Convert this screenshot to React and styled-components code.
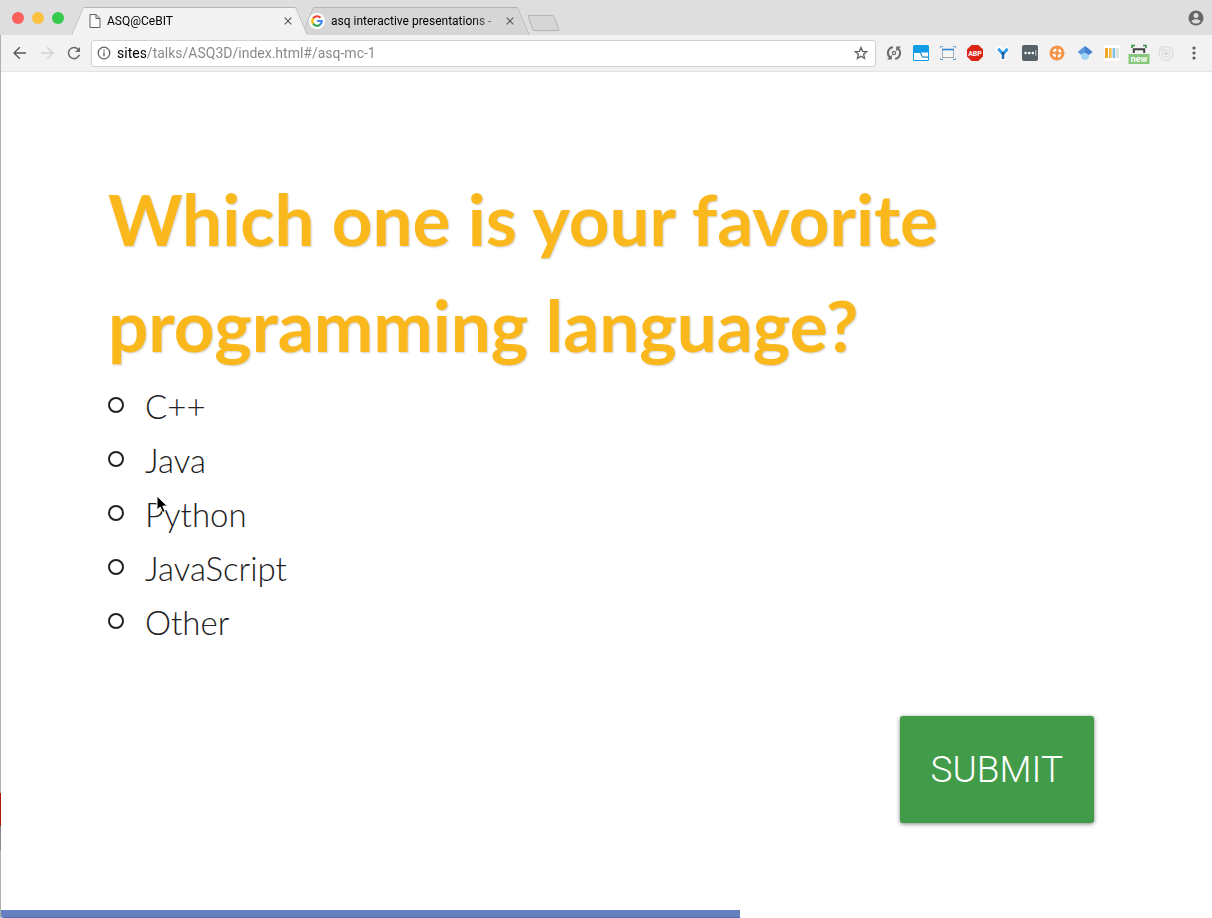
import React from "react";
import styled, { createGlobalStyle } from "styled-components";

const GlobalStyle = createGlobalStyle`
  *, *::before, *::after { box-sizing: border-box; }
  body { margin: 0; background: #fff; }
  button { border: 0; padding: 0; background: none; font: inherit; color: inherit; cursor: pointer; }
`;

const Window = styled.div`
  position: relative;
  display: flex;
  flex-direction: column;
  min-height: 100vh;
  font-family: Roboto, "Liberation Sans", sans-serif;

  &::before {
    content: "";
    position: absolute;
    top: 35px;
    bottom: 0;
    left: 0;
    width: 1px;
    background: linear-gradient(
      to top,
      #b0b0b0 68px,
      #8a8a8a 68px,
      #8a8a8a 92px,
      #ab1a0c 92px,
      #ab1a0c 125px,
      #b0b0b0 125px
    );
  }
`;

const TabStrip = styled.header`
  display: flex;
  align-items: flex-end;
  height: 35px;
  padding-right: 8px;
  background: #dedede;
`;

const WindowControls = styled.div`
  display: flex;
  align-items: center;
  align-self: stretch;
  gap: 8px;
  width: 77px;
  padding-left: 12px;
`;

const Light = styled.button`
  width: 12px;
  height: 12px;
  border-radius: 50%;
  background: ${(p) => p.$color};
`;

const Tabs = styled.nav`
  display: flex;
  gap: 5px;
`;

const Tab = styled.div`
  position: relative;
  z-index: ${(p) => (p.$active ? 2 : 1)};
  display: flex;
  align-items: center;
  width: ${(p) => (p.$active ? "225px" : "217px")};
  height: 28px;
  padding-right: 8px;
  padding-left: ${(p) => (p.$active ? "12px" : "2px")};

  &::before,
  &::after {
    content: "";
    position: absolute;
    z-index: -1;
    top: 0;
    bottom: 0;
    width: 55%;
    background: ${(p) => (p.$active ? "#f2f2f2" : "#d6d6d6")};
    border-top: 1px solid #b4b4b4;
  }
  &::before {
    left: 0;
    border-left: 1px solid #b4b4b4;
    border-top-left-radius: 2px;
    transform: skewX(-23deg);
  }
  &::after {
    right: 0;
    border-right: 1px solid #b4b4b4;
    border-top-right-radius: 2px;
    transform: skewX(23deg);
  }
`;

const TabLink = styled.a`
  display: flex;
  flex: 1;
  align-items: center;
  gap: 6px;
  min-width: 0;
  color: #000;
  font-size: 12px;
  line-height: 16px;
  text-decoration: none;
`;

const TabTitle = styled.span`
  flex: 1;
  overflow: hidden;
  white-space: nowrap;
  mask-image: linear-gradient(to left, transparent, #000 32px);
`;

const TabClose = styled.button`
  display: flex;
  align-items: center;
  justify-content: center;
  width: 12px;
  height: 14px;
  color: #5a5a5a;
`;

const NewTab = styled.button`
  width: 27px;
  height: 16px;
  margin: 0 0 4px 6px;
  border: 1px solid #b4b4b4;
  border-radius: 2px;
  background: #d6d6d6;
  transform: skewX(20deg);
`;

const Profile = styled.button`
  display: flex;
  align-self: center;
  margin-left: auto;
`;

const Toolbar = styled.div`
  display: flex;
  align-items: center;
  gap: 4px;
  height: 37px;
  padding: 0 4px 0 6px;
  background: #f2f2f2;
  border-bottom: 1px solid #e4e4e4;
`;

const NavButtons = styled.div`
  display: grid;
  grid-template-columns: repeat(3, 27px);
`;

const IconButton = styled.button`
  display: flex;
  align-items: center;
  justify-content: center;
  height: 24px;
`;

const AddressBar = styled.div`
  display: flex;
  flex: 1;
  align-items: center;
  gap: 6px;
  min-width: 0;
  height: 27px;
  padding: 0 6px 0 5px;
  background: #fff;
  border: 1px solid #d2d2d2;
  border-radius: 3px;
`;

const AddressInput = styled.input`
  flex: 1;
  min-width: 0;
  padding: 0;
  border: 0;
  outline: 0;
  background: linear-gradient(to right, #000 29px, #858585 29px);
  background-clip: text;
  -webkit-text-fill-color: transparent;
  font-family: inherit;
  font-size: 14px;
  line-height: 20px;
`;

const Extensions = styled.div`
  display: grid;
  grid-template-columns: repeat(11, 1fr);
  width: 300px;
  margin-right: -4px;
`;

const MenuButton = styled(IconButton)`
  width: 28px;
`;

const Slide = styled.main`
  flex: 1;
  padding: 94px 118px 80px 108px;
  color: #212121;
  font-family: Lato, "Liberation Sans", sans-serif;
`;

const Question = styled.h1`
  margin: 0 0 1px;
  color: #fbb81d;
  font-size: 71px;
  font-weight: 700;
  line-height: 106px;
  text-shadow: 1px 1px 2px rgba(0, 0, 0, 0.18);
`;

const Options = styled.fieldset`
  display: flex;
  flex-direction: column;
  align-items: flex-start;
  margin: 0;
  padding: 0;
  border: 0;
`;

const Option = styled.label`
  position: relative;
  display: flex;
  align-items: center;
  gap: 21px;
  font-size: 33px;
  font-weight: 300;
  line-height: 54px;
`;

const Radio = styled.input`
  appearance: none;
  width: 16px;
  height: 16px;
  margin: 0 0 3px;
  border: 2px solid #212121;
  border-radius: 50%;

  &:checked {
    background: #212121;
    box-shadow: inset 0 0 0 2px #fff;
  }
`;

const Pointer = styled.svg`
  position: absolute;
  top: 8px;
  left: 48px;
`;

const Actions = styled.div`
  display: flex;
  justify-content: flex-end;
  margin-top: 67px;
`;

const Submit = styled.button`
  && {
    padding: 0 31px;
    background: #419b48;
    border-radius: 3px;
    box-shadow: 0 1px 4px rgba(0, 0, 0, 0.5);
    color: #fff;
    font-family: Roboto, "Liberation Sans", sans-serif;
    font-size: 37px;
    font-weight: 300;
    line-height: 107px;
    text-transform: uppercase;
  }
`;

const Track = styled.div`
  height: 8px;
  padding-left: 1px;
`;

const Progress = styled.div`
  width: 61%;
  height: 100%;
  background: #6580c0;
  border-bottom: 1px solid #506bb2;
  border-bottom-left-radius: 3px;
`;

const Icon = ({ size = 18, children, ...rest }) => (
  <svg width={size} height={size} viewBox={`0 0 ${size} ${size}`} fill="none" aria-hidden="true" {...rest}>
    {children}
  </svg>
);

const CloseIcon = () => (
  <Icon size={8} stroke="currentColor" strokeWidth="1.2">
    <path d="M.7 .7 7.3 7.3M7.3 .7 .7 7.3" />
  </Icon>
);

const PageIcon = () => (
  <svg width="12" height="16" viewBox="0 0 12 16" fill="#fafafa" stroke="#626262" aria-hidden="true">
    <path d="M1 1.5h6l4 4v9H1zM7 1.5v4h4" />
  </svg>
);

const GoogleIcon = () => (
  <Icon size={16}>
    <circle cx="8" cy="8" r="8" fill="#fff" />
    <g strokeWidth="2.2">
      <path d="M4.1 5.3A4.8 4.8 0 0 1 11.5 4.7" stroke="#ea4335" />
      <path d="M4.1 10.7A4.8 4.8 0 0 1 4.1 5.3" stroke="#fbbc05" />
      <path d="M11.2 11.6A4.8 4.8 0 0 1 4.1 10.7" stroke="#34a853" />
      <path d="M8.2 8h4.6a4.8 4.8 0 0 1-1.6 3.6" stroke="#4285f4" />
    </g>
  </Icon>
);

const ArrowIcon = ({ color, flip }) => (
  <Icon size={14} stroke={color} strokeWidth="1.5">
    <path d={flip ? "M1 7h12M7.2 1.2 13 7l-5.8 5.8" : "M13 7H1M6.8 1.2 1 7l5.8 5.8"} />
  </Icon>
);

const ReloadIcon = () => (
  <Icon size={14}>
    <path d="M11.2 3.2A5.6 5.6 0 1 0 12.4 8.8" stroke="#6a6a6a" strokeWidth="1.5" />
    <path d="M13 1v5H8z" fill="#6a6a6a" />
  </Icon>
);

const InfoIcon = () => (
  <Icon size={14}>
    <circle cx="7" cy="7" r="5.8" stroke="#5f6368" strokeWidth="1.3" />
    <path d="M6.3 6.2h1.4v4H6.3zM6.3 3.8h1.4v1.4H6.3z" fill="#5f6368" />
  </Icon>
);

const StarIcon = () => (
  <Icon size={16} stroke="#5f5f5f" strokeWidth="1.3">
    <path d="M8 2.4l1.6 3.9 4.2.3-3.2 2.7 1 4.1L8 11.2l-3.6 2.2 1-4.1-3.2-2.7 4.2-.3z" />
  </Icon>
);

const ProfileIcon = () => (
  <Icon size={16}>
    <circle cx="8" cy="8" r="7.5" fill="#666" />
    <circle cx="8" cy="5.6" r="2.5" fill="#dedede" />
    <path d="M3.4 11.2C4.4 9.6 6.6 9.2 8 9.2s3.6.4 4.6 2c-1 1.4-2.8 2.3-4.6 2.3s-3.6-.9-4.6-2.3z" fill="#dedede" />
  </Icon>
);

const extensions = [
  {
    name: "Sync",
    art: (
      <>
        <path d="M7.8 3A6.1 6.1 0 0 0 4.8 13.4M10.2 15A6.1 6.1 0 0 0 13.2 4.6" stroke="#6b6b6b" strokeWidth="2" />
        <path d="M2 15.4h4.8v-4.6zM16 2.6h-4.8v4.6z" fill="#6b6b6b" />
        <circle cx="9" cy="9" r="1.6" stroke="#6b6b6b" strokeWidth="1.2" />
      </>
    ),
  },
  {
    name: "Screen capture",
    art: (
      <>
        <rect x="1" y="1" width="16" height="16" rx="1.5" fill="#109de8" />
        <path d="M2 9h6.5l2 4.5H16V16H2z" fill="#fff" />
        <path d="M8.8 8.5H16v4.5h-5.2z" fill="#fff" />
        <path d="M8.2 8.5l2.2 4.5H16" stroke="#2c7fae" />
      </>
    ),
  },
  {
    name: "Window resizer",
    art: (
      <>
        <path d="M1.5 4V2.5H4M14 2.5h2.5V4M1.5 14v1.5H4M14 15.5h2.5V14" stroke="#63a4dc" />
        <rect x="3.5" y="5.5" width="11" height="8" fill="#f7f7f7" stroke="#a0a8b0" />
        <path d="M3 5.5h12" stroke="#2f86d0" strokeWidth="1.6" />
      </>
    ),
  },
  {
    name: "Ad blocker",
    art: (
      <>
        <path d="M5.6 1h6.8L17 5.6v6.8L12.4 17H5.6L1 12.4V5.6z" fill="#dc2414" />
        <text x="9" y="11.8" textAnchor="middle" fontFamily="Roboto, sans-serif" fontSize="7" fontWeight="700" fill="#fff">
          ABP
        </text>
      </>
    ),
  },
  {
    name: "Branches",
    art: (
      <>
        <path d="M5 5.5 9 9.5 13 5.5M9 9.5V14" stroke="#fff" strokeWidth="6" strokeLinecap="round" />
        <path d="M4.2 4.8 9 10 13.6 4.8" stroke="#2f9bee" strokeWidth="3" />
        <path d="M9 9V15" stroke="#2a6fae" strokeWidth="2.6" />
        <path d="M7.4 8.4h3.2L9 11z" fill="#173c66" />
      </>
    ),
  },
  {
    name: "Passwords",
    art: (
      <>
        <rect x="1" y="1" width="16" height="16" rx="2" fill="#566168" />
        <circle cx="4.6" cy="9" r="1.3" fill="#fff" />
        <circle cx="8.2" cy="9" r="1.3" fill="#fff" />
        <circle cx="11.8" cy="9" r="1.3" fill="#fff" />
        <path d="M14.8 6.2v5.6" stroke="#c6cbce" />
      </>
    ),
  },
  {
    name: "Help",
    art: (
      <>
        <circle cx="9" cy="9" r="7.5" fill="#f49349" />
        <circle cx="9" cy="9" r="3.6" stroke="#fff" strokeWidth="2.4" strokeDasharray="3.4 2.25" strokeDashoffset="-1.13" />
      </>
    ),
  },
  {
    name: "Scholar",
    art: (
      <>
        <path d="M5 8h8v4.2C13 14.6 11 16 9 16s-4-1.4-4-3.8z" fill="#a1d5f6" />
        <path d="M9 2 16.5 8 13 10.8C11.8 8.4 6.2 8.4 5 10.8L1.5 8z" fill="#5b98e0" />
        <path d="M9 2 16.5 8 13 10.8 9 8.8z" fill="#4480cd" />
      </>
    ),
  },
  {
    name: "Columns",
    art: (
      <>
        <rect x="1" y="1" width="16" height="16" rx="2" fill="#fff" />
        <path d="M3.5 4v10" stroke="#efa528" strokeWidth="3" />
        <path d="M7.3 4v10" stroke="#f3bc43" strokeWidth="2.6" />
        <path d="M10.9 4v10" stroke="#7dbce9" strokeWidth="2.6" />
        <path d="M14.5 4v10" stroke="#dcdcdc" strokeWidth="2.6" />
      </>
    ),
  },
  {
    name: "Page ruler",
    size: 22,
    art: (
      <>
        <path d="M4 6V3.5h3M15 3.5h3V6" stroke="#36903c" strokeWidth="1.6" />
        <path d="M5.8 11V7.2h10.4V11" stroke="#404040" strokeWidth="2" />
        <rect x="0.5" y="12" width="21" height="10.5" fill="#85c77d" />
        <text x="11" y="20" textAnchor="middle" fontFamily="Inter, sans-serif" fontSize="8" fontWeight="700" fill="#fff">
          new
        </text>
      </>
    ),
  },
  {
    name: "Developer tools",
    art: (
      <>
        <circle cx="9" cy="9.5" r="7" fill="#efefef" stroke="#dadada" />
        <circle cx="9" cy="9.5" r="3.6" fill="#f6f6f6" stroke="#dadada" />
        <circle cx="9" cy="9.5" r="1.8" fill="#d4d4d4" />
        <circle cx="4.5" cy="4.2" r="1.7" fill="#efefef" stroke="#d8d8d8" />
        <circle cx="13.3" cy="3.6" r="1.2" fill="#dcdcdc" />
      </>
    ),
  },
];

const answers = ["C++", "Java", "Python", "JavaScript", "Other"];

export default function App() {
  return (
    <Window>
      <GlobalStyle />
      <TabStrip>
        <WindowControls>
          <Light $color="#fc605b" aria-label="Close window" />
          <Light $color="#fbc241" aria-label="Minimise window" />
          <Light $color="#34cb4d" aria-label="Zoom window" />
        </WindowControls>
        <Tabs aria-label="Tabs">
          <Tab $active>
            <TabLink href="#asq" aria-current="page">
              <PageIcon />
              <TabTitle>ASQ@CeBIT</TabTitle>
            </TabLink>
            <TabClose aria-label="Close ASQ@CeBIT">
              <CloseIcon />
            </TabClose>
          </Tab>
          <Tab>
            <TabLink href="#search">
              <GoogleIcon />
              <TabTitle>asq interactive presentations -</TabTitle>
            </TabLink>
            <TabClose aria-label="Close search">
              <CloseIcon />
            </TabClose>
          </Tab>
        </Tabs>
        <NewTab aria-label="New tab" />
        <Profile aria-label="Profile">
          <ProfileIcon />
        </Profile>
      </TabStrip>

      <Toolbar>
        <NavButtons>
          <IconButton aria-label="Back">
            <ArrowIcon color="#5a5a5a" />
          </IconButton>
          <IconButton aria-label="Forward">
            <ArrowIcon color="#d4d4d4" flip />
          </IconButton>
          <IconButton aria-label="Reload">
            <ReloadIcon />
          </IconButton>
        </NavButtons>
        <AddressBar>
          <InfoIcon />
          <AddressInput aria-label="Address" defaultValue="sites/talks/ASQ3D/index.html#/asq-mc-1" spellCheck={false} />
          <IconButton aria-label="Bookmark this page">
            <StarIcon />
          </IconButton>
        </AddressBar>
        <Extensions>
          {extensions.map(({ name, size, art }) => (
            <IconButton key={name} aria-label={name}>
              <Icon size={size}>{art}</Icon>
            </IconButton>
          ))}
        </Extensions>
        <MenuButton aria-label="Menu">
          <Icon size={16} fill="#5a5a5a">
            <circle cx="8" cy="3" r="1.6" />
            <circle cx="8" cy="8" r="1.6" />
            <circle cx="8" cy="13" r="1.6" />
          </Icon>
        </MenuButton>
      </Toolbar>

      <Slide>
        <Question id="question">Which one is your favorite programming language?</Question>
        <form onSubmit={(e) => e.preventDefault()}>
          <Options aria-labelledby="question">
            {answers.map((answer) => (
              <Option key={answer}>
                <Radio type="radio" name="language" value={answer} />
                {answer}
                {answer === "Python" && (
                  <Pointer width="13" height="20" viewBox="0 0 13 20" aria-hidden="true">
                    <path d="M1 1v14l3.2-3 2.4 5.6 2.6-1.1-2.4-5.4h4.6z" fill="#000" stroke="#fff" />
                  </Pointer>
                )}
              </Option>
            ))}
          </Options>
          <Actions>
            <Submit type="submit">Submit</Submit>
          </Actions>
        </form>
      </Slide>
      <Track>
        <Progress role="progressbar" aria-label="Presentation progress" aria-valuenow={61} aria-valuemin={0} aria-valuemax={100} />
      </Track>
    </Window>
  );
}
